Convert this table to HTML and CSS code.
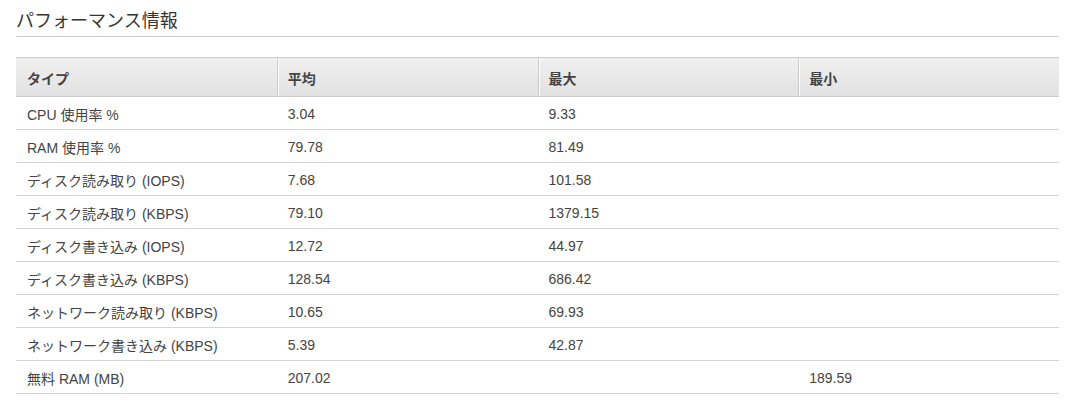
FILE: index.html
```html
<!DOCTYPE html>
<html lang="ja">
<head>
<meta charset="utf-8">
<title>パフォーマンス情報</title>
<link rel="stylesheet" href="styles.css">
</head>
<body>
<div class="page">
  <h2 class="title">パフォーマンス情報</h2>
  <table class="perf">
    <thead>
      <tr><th>タイプ</th><th class="div">平均</th><th class="div">最大</th><th class="div">最小</th></tr>
    </thead>
    <tbody>
      <tr><td>CPU 使用率 %</td><td>3.04</td><td>9.33</td><td></td></tr>
      <tr><td>RAM 使用率 %</td><td>79.78</td><td>81.49</td><td></td></tr>
      <tr><td>ディスク読み取り (IOPS)</td><td>7.68</td><td>101.58</td><td></td></tr>
      <tr><td>ディスク読み取り (KBPS)</td><td>79.10</td><td>1379.15</td><td></td></tr>
      <tr><td>ディスク書き込み (IOPS)</td><td>12.72</td><td>44.97</td><td></td></tr>
      <tr><td>ディスク書き込み (KBPS)</td><td>128.54</td><td>686.42</td><td></td></tr>
      <tr><td>ネットワーク読み取り (KBPS)</td><td>10.65</td><td>69.93</td><td></td></tr>
      <tr><td>ネットワーク書き込み (KBPS)</td><td>5.39</td><td>42.87</td><td></td></tr>
      <tr><td>無料 RAM (MB)</td><td>207.02</td><td></td><td>189.59</td></tr>
    </tbody>
  </table>
</div>
</body>
</html>
```

FILE: styles.css
```css
html, body {
  margin: 0;
  padding: 0;
  background: #fff;
}
.page {
  padding: 0 12px 0 16px;
  font-family: "Liberation Sans", "Noto Sans CJK JP", sans-serif;
  color: #444;
}
.title {
  margin: 0;
  padding: 11px 0 4px 0;
  font-size: 18px;
  line-height: 21px;
  font-weight: normal;
  color: #333;
  border-bottom: 1px solid #ccc;
}
.perf {
  margin-top: 20px;
  width: 100%;
  table-layout: fixed;
  border-collapse: separate;
  border-spacing: 0;
  font-size: 14px;
}
.perf th {
  height: 36px;
  padding: 2px 11px 0 11px;
  text-align: left;
  font-weight: bold;
  color: #444;
  background: linear-gradient(#f0f0f0, #e2e2e2);
  border-top: 1px solid #ccc;
  border-bottom: 1px solid #ccc;
}
.perf th.div {
  border-left: 1px solid #ccc;
  box-shadow: inset 1px 0 0 #fafafa;
  padding-left: 10px;
}
.perf td {
  height: 30px;
  padding: 2px 11px 0 11px;
  border-bottom: 1px solid #d4d4d4;
  color: #444;
}
```
